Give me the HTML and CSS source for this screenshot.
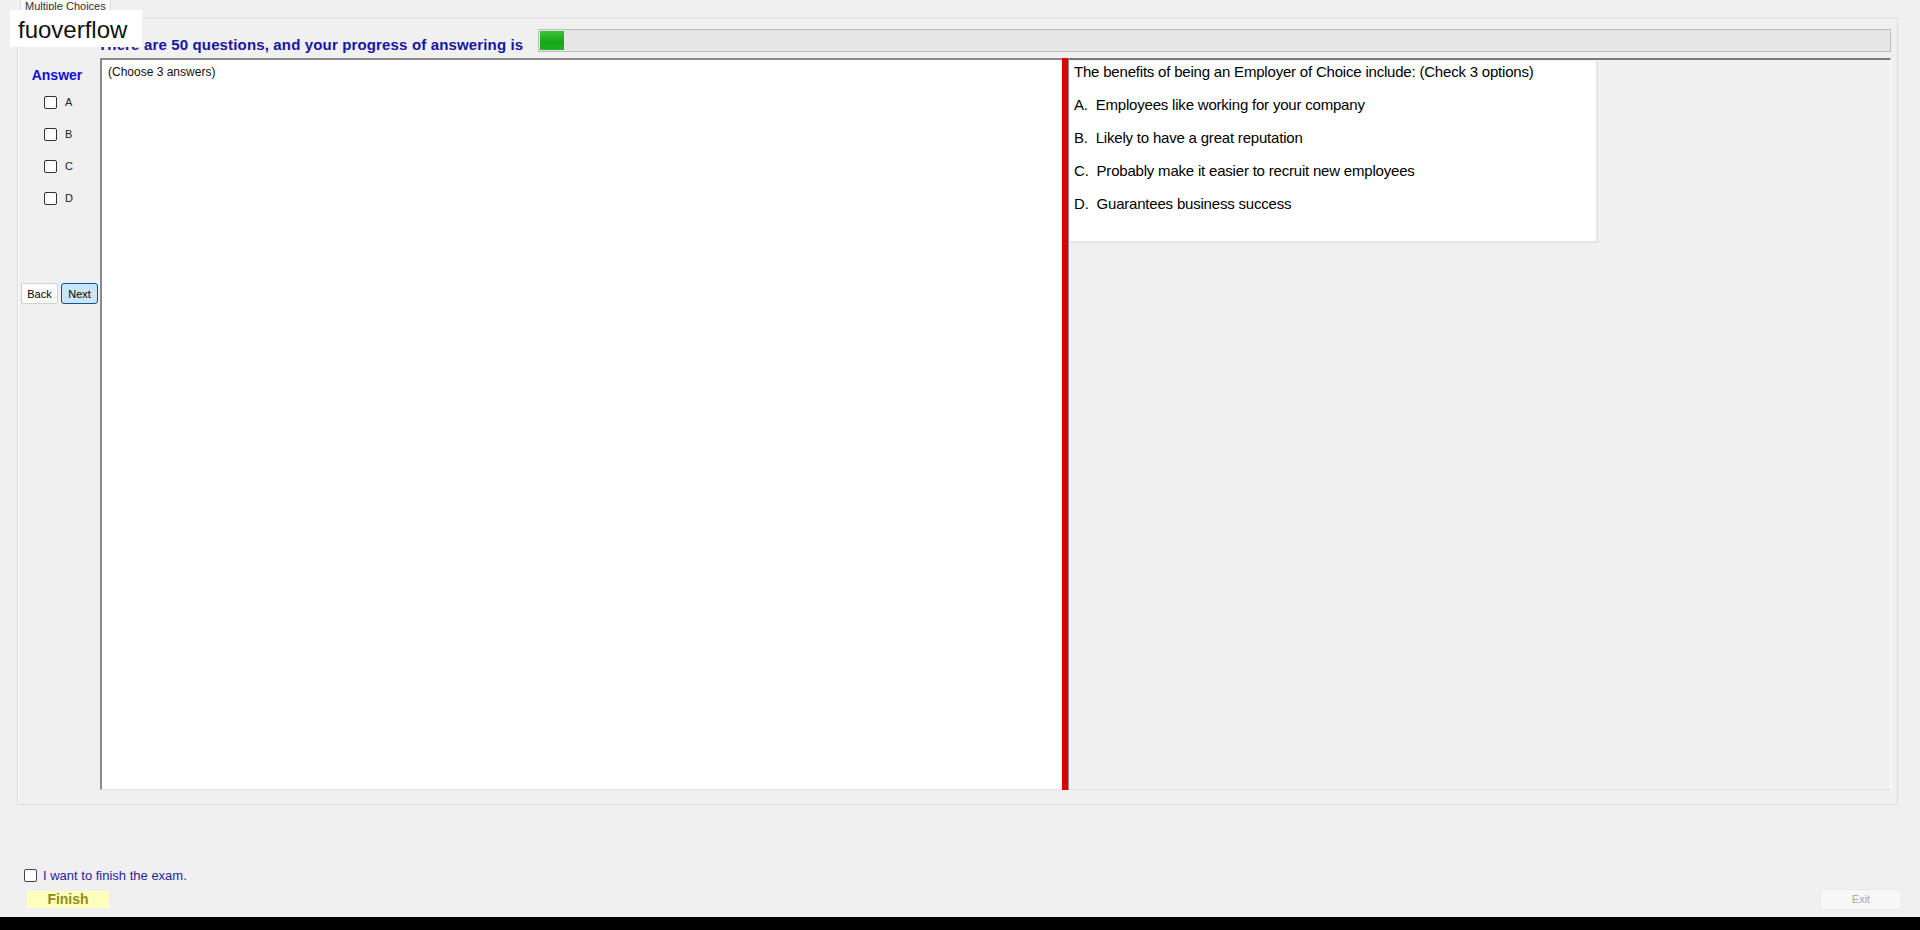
FILE: index.html
```html
<!DOCTYPE html>
<html lang="en">
<head>
  <meta charset="UTF-8" />
  <title>Multiple Choices</title>
  <link rel="stylesheet" href="styles.css">
</head>
<body>

  <div class="tabs">
    <div class="tab">Multiple Choices</div>
  </div>

  <div class="group">
    <div class="head">
      <h1 class="title">There are 50 questions, and your progress of answering is</h1>
      <div class="progress">
        <div class="progress-fill" style="width: 24px"></div>
      </div>
    </div>

    <div class="main">
      <div class="side">
        <div class="side-label">Answer</div>
        <label class="opt"><input type="checkbox" /> A</label>
        <label class="opt"><input type="checkbox" /> B</label>
        <label class="opt"><input type="checkbox" /> C</label>
        <label class="opt"><input type="checkbox" /> D</label>
        <div class="nav">
          <button class="btn">Back</button>
          <button class="btn btn-active">Next</button>
        </div>
      </div>

      <div class="question">(Choose 3 answers)</div>

      <div class="splitter"></div>

      <div class="answers">
        <div class="answer-box">
          <p>The benefits of being an Employer of Choice include: (Check 3 options)</p>
          <p>A.&nbsp; Employees like working for your company</p>
          <p>B.&nbsp; Likely to have a great reputation</p>
          <p>C.&nbsp; Probably make it easier to recruit new employees</p>
          <p>D.&nbsp; Guarantees business success</p>
        </div>
      </div>
    </div>
  </div>

  <div class="footer">
    <label class="finish-check"><input type="checkbox" /> I want to finish the exam.</label>
    <div class="footer-row">
      <button class="finish-btn">Finish</button>
      <button class="exit-btn" disabled>Exit</button>
    </div>
  </div>

  <div class="taskbar"></div>

  <!-- watermark over the window -->
  <div class="brand">fuoverflow</div>

</body>
</html>
```

FILE: styles.css
```css
* {
  box-sizing: border-box;
}

body {
  margin: 0;
  width: 1920px;
  height: 930px;
  overflow: hidden;
  background: #f0f0f0;
  font-family: 'Liberation Sans', Arial, sans-serif;
  color: #000;
  display: flex;
  flex-direction: column;
  position: relative;
}

.tabs {
  display: flex;
  align-items: flex-start;
  height: 18px;
  padding-left: 20px;
}

.tab {
  height: 13px;
  padding: 0 4px;
  font-size: 11px;
  line-height: 13px;
  color: #333;
  background: #f9f9f9;
  border: 1px solid #d9d9d9;
  border-top: none;
  border-bottom: none;
  overflow: hidden;
}

.group {
  margin-left: 17px;
  width: 1881px;
  height: 787px;
  border: 1px solid #dcdcdc;
  box-shadow: inset 1px 1px 0 #fff;
  padding-bottom: 14px;
}

.head {
  height: 39px;
  display: flex;
  align-items: flex-start;
  padding-left: 80px;
  padding-right: 6px;
}

.title {
  margin: 17px 0 0;
  font-size: 15px;
  font-weight: bold;
  line-height: 18px;
  letter-spacing: 0.15px;
  color: #1616a4;
  white-space: nowrap;
}

.progress {
  flex: 1;
  margin-left: 15px;
  margin-top: 10px;
  height: 23px;
  background: #e6e6e6;
  border: 1px solid #bcbcbc;
  padding: 1px;
}

.progress-fill {
  height: 100%;
  background: linear-gradient(#3cc23c, #14a814 60%, #22b022);
}

.main {
  display: flex;
  height: 732px;
  padding-right: 6px;
}

.side {
  width: 82px;
  display: flex;
  flex-direction: column;
  align-items: center;
  padding-top: 8px;
}

.side-label {
  font-size: 14px;
  font-weight: bold;
  color: #1010d0;
  height: 18px;
  line-height: 18px;
  margin-bottom: 10px;
  margin-right: 4px;
}

.opt {
  align-self: flex-start;
  display: flex;
  align-items: center;
  gap: 8px;
  height: 32px;
  margin-left: 26px;
  margin-top: -8px;
  margin-bottom: 8px;
  font-size: 11px;
  color: #222;
}

.opt input,
.finish-check input {
  appearance: none;
  margin: 0;
  width: 13px;
  height: 13px;
  border: 1px solid #333;
  border-radius: 2px;
  background: #fff;
}

.nav {
  align-self: flex-start;
  display: flex;
  gap: 3px;
  margin-top: 61px;
  margin-left: 3px;
}

.btn {
  width: 37px;
  height: 21px;
  padding: 0;
  font-family: inherit;
  font-size: 11px;
  color: #000;
  background: #fdfdfd;
  border: 1px solid #d0d0d0;
  border-radius: 2px;
}

.btn-active {
  background: #cce4f7;
  border: 1px solid #005499;
  border-radius: 3px;
}

.question {
  width: 962px;
  height: 732px;
  background: #fff;
  border-top: 2px solid #8a8a8a;
  border-left: 2px solid #8a8a8a;
  border-bottom: 1px solid #e0e0e0;
  padding: 5px 6px;
  font-size: 12px;
  color: #111;
}

.splitter {
  width: 7px;
  background: #e00000;
  border-right: 1px solid #8a8a8a;
}

.answers {
  flex: 1;
  height: 732px;
  border-top: 2px solid #7a7a7a;
  border-bottom: 1px solid #e0e0e0;
  border-right: 1px solid #fff;
  padding-left: 1px;
  padding-top: 1px;
}

.answer-box {
  width: 528px;
  height: 182px;
  background: #fff;
  border-right: 2px solid #e4e4e4;
  border-bottom: 2px solid #e4e4e4;
  padding-left: 4px;
  font-size: 15px;
  letter-spacing: -0.2px;
}

.answer-box p {
  margin: 0 0 11px;
  line-height: 22px;
}

.footer {
  margin-top: 62px;
  padding-left: 24px;
  padding-right: 18px;
}

.finish-check {
  display: flex;
  align-items: center;
  gap: 6px;
  height: 16px;
  font-size: 13px;
  color: #1e1e9e;
}

.finish-check input {
  border-color: #444;
}

.footer-row {
  display: flex;
  justify-content: space-between;
  align-items: center;
  margin-top: 4px;
  height: 24px;
}

.finish-btn {
  width: 82px;
  height: 17px;
  margin-left: 3px;
  padding: 0;
  border: none;
  background: #ffffbe;
  font-family: inherit;
  font-size: 14px;
  font-weight: bold;
  line-height: 17px;
  color: #8c8c1c;
}

.exit-btn {
  width: 82px;
  height: 21px;
  padding: 0;
  font-family: inherit;
  font-size: 11px;
  color: #a8a8a8;
  background: #f7f7f7;
  border: 1px solid #e8e8e8;
  border-radius: 2px;
}

.taskbar {
  margin-top: auto;
  height: 13px;
  background: #000;
}

.brand {
  position: absolute;
  left: 10px;
  top: 10px;
  width: 132px;
  height: 37px;
  padding: 3px 0 0 8px;
  background: #fff;
  font-size: 24px;
  line-height: 34px;
  color: #111;
}
```
